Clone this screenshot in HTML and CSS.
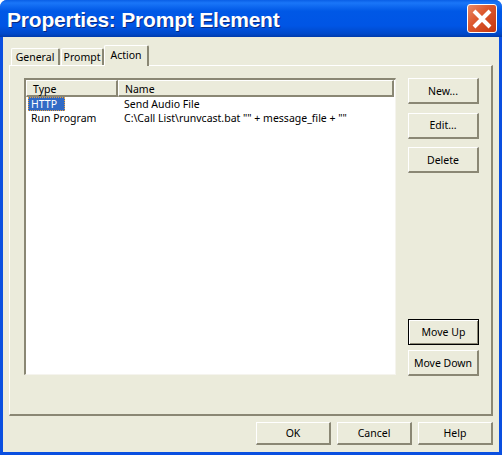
FILE: index.html
```html
<!DOCTYPE html>
<html lang="en">
<head>
    <meta charset="UTF-8">
    <meta name="viewport" content="width=device-width, initial-scale=1.0">
    <title>Properties: Prompt Element</title>
    <link rel="stylesheet" href="styles.css">
</head>
<body>
    <div class="window">
        <div class="titlebar">
            <span class="title">Properties: Prompt Element</span>
            <div class="close">
                <svg width="22" height="22" viewBox="0 0 22 22">
                    <path d="M3 3 L19 19 M19 3 L3 19" stroke="#fff" stroke-width="4"/>
                </svg>
            </div>
        </div>

        <div class="client">
            <div class="tabs">
                <div class="tab tab-general">General</div>
                <div class="tab tab-prompt">Prompt</div>
                <div class="tab tab-action">Action</div>
            </div>

            <div class="panel">
                <div class="list">
                    <div class="list-head">
                        <div class="col-type head-cell">Type</div>
                        <div class="col-name head-cell">Name</div>
                    </div>
                    <div class="list-row">
                        <div class="col-type"><span class="selected">HTTP</span></div>
                        <div class="col-name">Send Audio File</div>
                    </div>
                    <div class="list-row">
                        <div class="col-type"><span class="cell-text">Run Program</span></div>
                        <div class="col-name">C:\Call List\runvcast.bat "" + message_file + ""</div>
                    </div>
                </div>

                <div class="side-buttons">
                    <button class="btn">New...</button>
                    <button class="btn">Edit...</button>
                    <button class="btn">Delete</button>
                    <div class="spacer"></div>
                    <button class="btn btn-default">Move Up</button>
                    <button class="btn">Move Down</button>
                </div>
            </div>

            <div class="footer">
                <button class="btn btn-wide">OK</button>
                <button class="btn btn-wide">Cancel</button>
                <button class="btn btn-wide">Help</button>
            </div>
        </div>
    </div>
</body>
</html>
```

FILE: styles.css
```css
html, body {
    margin: 0;
    padding: 0;
}

body {
    width: 502px;
    height: 455px;
    overflow: hidden;
    background: #fff;
    font-family: "Noto Sans", Arial, sans-serif;
    font-size: 10.5px;
    color: #000;
}

.window {
    width: 502px;
    height: 455px;
    display: flex;
    flex-direction: column;
    background: #0a4fe0;
    border-radius: 7px 7px 0 0;
}

/* Title bar */
.titlebar {
    height: 37px;
    flex: none;
    display: flex;
    align-items: center;
    justify-content: space-between;
    padding: 2px 5px 0 7px;
    box-sizing: border-box;
    border-radius: 7px 7px 0 0;
    background: linear-gradient(to bottom, #0a5fe6 0%, #1a76f8 8%, #0058e6 30%, #0055e5 70%, #0048c8 92%, #003aaa 100%);
}

.title {
    font-family: "Liberation Sans", Arial, sans-serif;
    font-weight: bold;
    font-size: 21px;
    letter-spacing: -0.2px;
    color: #fff;
    text-shadow: 1px 1px 0 #0a2a80;
}

.close {
    width: 30px;
    height: 29px;
    margin-bottom: 2px;
    box-sizing: border-box;
    border: 1px solid #fff;
    border-radius: 3px;
    background: linear-gradient(135deg, #e88a68 0%, #dd5a30 40%, #c5360f 100%);
    display: flex;
    align-items: center;
    justify-content: center;
}

.client {
    flex: 1;
    margin: 0 3px 3px 3px;
    background: #ebebdb;
    display: flex;
    flex-direction: column;
    padding: 8px 6px 7px 6px;
}

/* Tabs */
.tabs {
    display: flex;
    align-items: flex-end;
    height: 20px;
    padding-left: 2px;
    position: relative;
    z-index: 1;
}

.tab {
    height: 17px;
    line-height: 16px;
    text-align: center;
    box-sizing: border-box;
    border-top: 1px solid #fff;
    border-left: 1px solid #fff;
    border-right: 2px solid #8a8774;
    border-radius: 2px 2px 0 0;
}

.tab-general {
    width: 49px;
    margin-right: 1px;
}

.tab-prompt {
    width: 43px;
}

.tab-action {
    width: 45px;
    height: 21px;
    margin-bottom: -1px;
    background: #ebebdb;
    line-height: 18px;
}

.panel {
    flex: 1;
    display: flex;
    gap: 12px;
    padding: 12px 12px 38px 14px;
    border-top: 1px solid #fff;
    border-left: 1px solid #fff;
    border-right: 2px solid #8a8774;
    border-bottom: 2px solid #8a8774;
}

/* List */
.list {
    flex: 1;
    margin-bottom: 1px;
    background: #fff;
    box-sizing: border-box;
    border-top: 2px solid #8a8774;
    border-left: 2px solid #8a8774;
    border-right: 1px solid #f5f4ee;
    border-bottom: 1px solid #f5f4ee;
}

.list-head {
    display: flex;
    height: 17px;
    padding-right: 1px;
    background: #fff;
    box-sizing: border-box;
}

.head-cell {
    box-sizing: border-box;
    height: 17px;
    line-height: 17px;
    border-top: 1px solid #fff;
    border-left: 1px solid #fff;
    border-right: 2px solid #8a8774;
    border-bottom: 2px solid #8a8774;
    background: #ebebdb;
}

.col-type {
    width: 92px;
    flex: none;
    padding-left: 6px;
    box-sizing: border-box;
}

.col-name {
    flex: 1;
    padding-left: 6px;
    box-sizing: border-box;
}

.list-row {
    display: flex;
    height: 14px;
    line-height: 14px;
}

.list-row .col-name {
    padding-left: 6px;
}

.list-row .col-type {
    padding-left: 2px;
}

.selected {
    display: block;
    width: 37px;
    padding-left: 3px;
    box-sizing: border-box;
    background: #316ac5;
    color: #fff;
    outline: 1px dotted #e8a040;
    outline-offset: -1px;
}

.cell-text {
    padding-left: 3px;
}

/* Buttons */
.side-buttons {
    width: 71px;
    flex: none;
    display: flex;
    flex-direction: column;
    gap: 8.5px;
}

.spacer {
    flex: 1;
}

.btn {
    width: 71px;
    height: 26px;
    padding: 0;
    box-sizing: border-box;
    background: #ebebdb;
    font-family: "Noto Sans", Arial, sans-serif;
    font-size: 10.5px;
    color: #000;
    border-top: 1px solid #fff;
    border-left: 1px solid #fff;
    border-right: 2px solid #8a8774;
    border-bottom: 2px solid #8a8774;
    border-radius: 0;
}

.btn-default {
    border: 1px solid #000;
    box-shadow: inset 1px 1px 0 #fff, inset -1px -1px 0 #8a8774;
    margin-bottom: -3.5px;
}

.footer {
    display: flex;
    justify-content: flex-end;
    gap: 6px;
    padding-top: 6px;
}

.btn-wide {
    width: 75px;
    height: 23px;
}
```
